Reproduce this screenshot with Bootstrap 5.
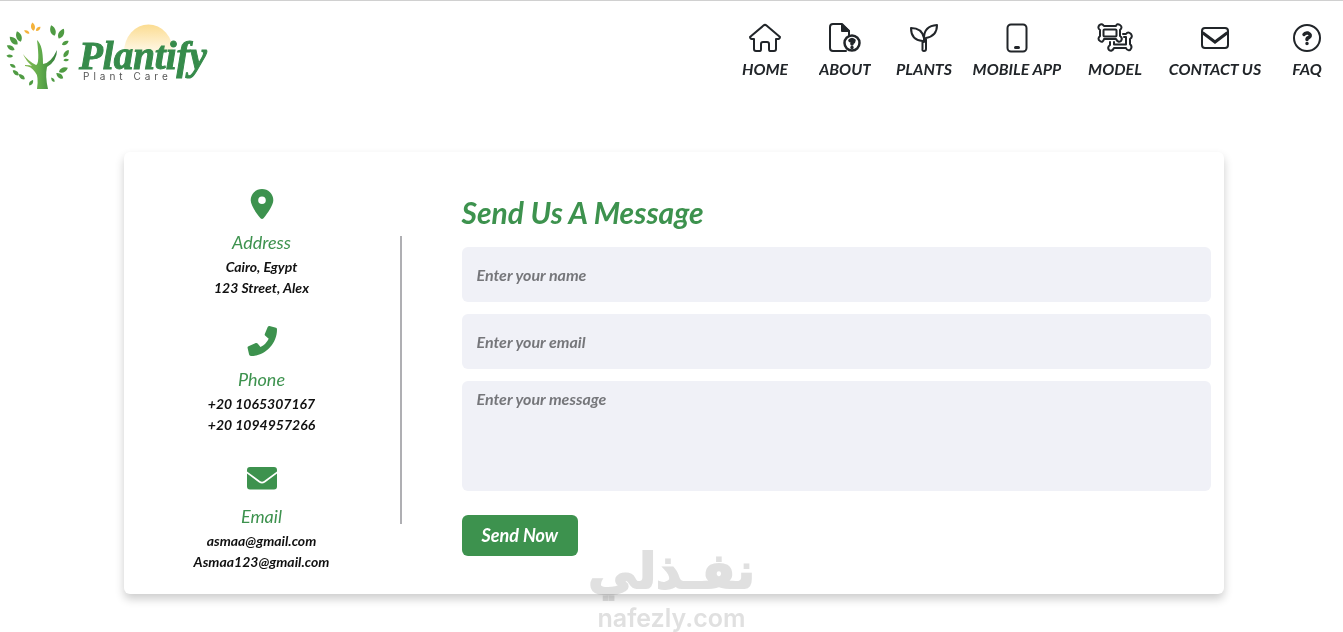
<!DOCTYPE html>
<html lang="en">
<head>
<meta charset="utf-8">
<meta name="viewport" content="width=device-width, initial-scale=1">
<title>Plantify - Contact Us</title>
<link href="https://cdn.jsdelivr.net/npm/bootstrap@5.3.0/dist/css/bootstrap.min.css" rel="stylesheet">
<style>
  :root { --leaf: #3d924e; }
  body { font-family: Lato, "Liberation Sans", sans-serif; font-style: italic; font-weight: 700; border-top: 1px solid #d0d0d0; color: #111; }
  .site-nav { padding: 21px 0 20px; }
  .brand-art { width: 212px; height: 80px; margin-top: -7px; }
  .menu { display: grid; grid-template-columns: 80px 80px 78px 108px 88px 112px 72px; }
  .menu a { color: #212529; font-size: 16px; line-height: 24px; white-space: nowrap; }
  .menu svg { width: 36px; height: 32px; fill: none; stroke: currentColor; stroke-width: 2; stroke-linejoin: round; stroke-linecap: round; }
  .menu span { overflow: hidden; margin-top: 3px; }
  main { padding-left: 4px; }
  .contact { width: 84%; max-width: 1100px; margin: 37px auto; border-radius: 6px; background: #fff; box-shadow: 0 5px 10px rgba(0,0,0,.2); padding: 36px 13px 22px 0; }
  .info { flex: 0 0 276px; gap: 27px; }
  .divider { width: 2px; height: 288px; background: #afafb3; }
  .info svg { width: 32px; height: 32px; fill: var(--leaf); margin-bottom: 9px; }
  .info h2 { font-size: 18px; line-height: 27px; font-weight: 400; color: var(--leaf); margin: 0; }
  .info p { font-size: 14px; line-height: 21px; margin: 0; }
  .message { padding: 6px 0 0 60px; }
  .message h1 { font-size: 30px; line-height: 36px; font-weight: 700; color: var(--leaf); margin: 0 0 17px; }
  .message .form-control { height: 55px; background: #f0f1f7; border: 0; border-radius: 6px; padding: 0 15px; font-size: 16px; font-style: italic; font-weight: 700; margin-bottom: 12px; }
  .message .form-control::placeholder { color: #75767a; opacity: 1; }
  .message textarea.form-control { height: 110px; padding-top: 6px; resize: none; margin-bottom: 24px; }
  .send { background: var(--leaf); color: #fff; font-size: 18px; line-height: 27px; font-style: italic; font-weight: 700; padding: 7px 20px; border-radius: 6px; }
  .stamp { position: absolute; left: 0; right: 0; top: 540px; color: #e0e0e0; mix-blend-mode: multiply; pointer-events: none; font-style: normal; text-align: center; }
  .stamp-ar { font: 700 49px/62px "DejaVu Sans", sans-serif; -webkit-text-stroke: 2px #e0e0e0; }
  .stamp-en { font: 600 25px/30px Inter, sans-serif; }
</style>
</head>
<body class="position-relative min-vh-100">
<header class="site-nav d-flex justify-content-between align-items-start">
  <a href="#" aria-label="Plantify home">
    <svg class="brand-art" viewBox="0 15 212 80">
      <defs>
        <linearGradient id="trunk"><stop offset="0" stop-color="#8bbb55"/><stop offset=".5" stop-color="#61ac4b"/><stop offset="1" stop-color="#347d3c"/></linearGradient>
        <linearGradient id="sun" x2="0" y2="1"><stop offset="0" stop-color="#fbdc91"/><stop offset="1" stop-color="#fff8e7"/></linearGradient>
        <path id="leaf" d="M0 5C-4 2-3-3 0-6 4-2 3 3 0 5Z"/>
      </defs>
      <path fill="url(#trunk)" d="M37 89Q39 76 35 72Q31 66 25 66V65Q30 65 32 66Q26 61 23 54Q28 61 36 65Q40 64 37 40Q43 45 43 64Q51 63 57 50Q57 61 47 67Q45 76 48 89Z"/>
      <g fill="#4f9b43">
        <use href="#leaf" transform="translate(19 37) rotate(-20)"/><use href="#leaf" transform="translate(14 41) rotate(-45)"/>
        <use href="#leaf" transform="translate(11 48) rotate(-60) scale(.8)"/><use href="#leaf" transform="translate(10 56) rotate(-85) scale(.6)"/>
        <use href="#leaf" transform="translate(13 66) rotate(-60) scale(.6)"/><use href="#leaf" transform="translate(16 73) rotate(-50) scale(.7)"/>
        <use href="#leaf" transform="translate(22 77) rotate(-50) scale(.7)"/><use href="#leaf" transform="translate(31 83) rotate(35) scale(.6)"/>
        <use href="#leaf" transform="translate(53 31) rotate(-18)"/><use href="#leaf" transform="translate(61 34) rotate(28)"/>
        <use href="#leaf" transform="translate(65 43) rotate(60) scale(.7)"/><use href="#leaf" transform="translate(66 54) rotate(35)  scale(.8)"/>
        <use href="#leaf" transform="translate(66 60) rotate(85) scale(.5)"/><use href="#leaf" transform="translate(63 70) rotate(65) scale(.9)"/>
        <use href="#leaf" transform="translate(60 76) rotate(-50) scale(.8)"/><use href="#leaf" transform="translate(53 80) rotate(-35) scale(.5)"/>
      </g>
      <g fill="#f4b23b"><use href="#leaf" transform="translate(27 32) rotate(-60) scale(.55)"/><use href="#leaf" transform="translate(33 27) rotate(-8) scale(.75)"/><use href="#leaf" transform="translate(38 29) rotate(50) scale(.55)"/></g>
      <path d="M124 52a24 27 0 0 1 49 0Z" fill="url(#sun)"/>
      <text x="79" y="69" font-family="Liberation Serif, serif" font-size="39" font-weight="700" font-style="italic" fill="#368b4b" stroke="#368b4b">Plantify</text>
      <text x="83" y="80" font-family="Inter, sans-serif" font-size="10" font-weight="400" font-style="normal" letter-spacing="4" fill="#555">Plant Care</text>
    </svg>
  </a>
  <nav class="menu">
    <a href="#" class="d-flex flex-column align-items-center text-decoration-none"><svg viewBox="0 0 36 32"><path d="M3 15 16.500 3.500Q18 2.200 19.500 3.500L33 15Q33 17.500 29 17V27Q29 29 27 29H23Q22 29 22 27V22Q22 20 20 20H16Q14 20 14 22V27Q14 29 13 29H9Q7 29 7 27V17Q3 17.500 3 15Z"/></svg><span>HOME</span></a>
    <a href="#" class="d-flex flex-column align-items-center text-decoration-none"><svg viewBox="0 0 36 32"><path d="M19 29H6Q3 29 3 26V5Q3 2 6 2H15L22 9V14M15 2V7Q15 9 17 9H22"/><path fill="currentColor" d="M15 3 22 9H15Z"/><circle cx="25" cy="21" r="7.500" stroke-width="2.500"/><path stroke-width="3.500" d="M23 18.500Q25 16.500 27 18.500Q27 20 25 21V22M25 25.500V25.500"/></svg><span>ABOUT</span></a>
    <a href="#" class="d-flex flex-column align-items-center text-decoration-none"><svg viewBox="0 0 36 32"><path d="M16.500 19Q5 18 5 6Q16 6 18 16Q18 4 31 3Q31 14 20 16V27Q20 29 18 29Q16 29 16.500 27ZM18 14V20"/></svg><span>PLANTS</span></a>
    <a href="#" class="d-flex flex-column align-items-center text-decoration-none"><svg viewBox="0 0 36 32"><rect x="8.500" y="2.500" width="19" height="27" rx="3.500"/><path stroke-width="3" d="M16.500 25.500H19.500"/></svg><span>MOBILE APP</span></a>
    <a href="#" class="d-flex flex-column align-items-center text-decoration-none"><svg viewBox="0 0 36 32"><g stroke-width="2"><path d="M7 4Q5 1 2.500 3Q0 6 3 8V14Q0 17 3 19Q6 21 7 17H19Q21 21 24 19Q26 16 23 14V8Q26 5 23 3Q20 1 19 4Z"/><rect x="6.500" y="7.500" width="13" height="7" rx="1"/></g><path stroke-width="2" d="M26 12H29Q31 9 34 12Q36 15 33 17V22Q36 25 33 28Q30 29 29 26H17Q15 30 12 28Q10 25 13 23V20M27 15H29V22.500H17V20"/></svg><span>MODEL</span></a>
    <a href="#" class="d-flex flex-column align-items-center text-decoration-none"><svg viewBox="0 0 36 32"><rect x="5" y="6" width="26" height="20" rx="3"/><path stroke-width="3" stroke-linejoin="miter" d="M6 11 18 20 30 11"/></svg><span>CONTACT US</span></a>
    <a href="#" class="d-flex flex-column align-items-center text-decoration-none"><svg viewBox="0 0 36 32"><circle cx="18" cy="16" r="13"/><path stroke-width="3.500" d="M15 12.500Q16 10.500 19 11Q23 13 20 15.500Q18 16 18 17.500M18 21.500V21.500"/></svg><span>FAQ</span></a>
  </nav>
</header>

<main>
  <section class="contact d-flex">
    <div class="info d-flex flex-column text-center">
      <div>
        <svg viewBox="0 0 32 32"><path fill-rule="evenodd" d="M16 1A11.300 11.300 0 0 0 4.700 12.300C4.700 17 10 25 14.500 30.300Q16 31.800 17.500 30.300C22 25 27.300 17 27.300 12.300A11.300 11.300 0 0 0 16 1ZM16 8.500A3.800 3.800 0 1 1 16 16.100 3.800 3.800 0 0 1 16 8.500Z"/></svg>
        <h2>Address</h2><p>Cairo, Egypt</p><p>123 Street, Alex</p>
      </div>
      <div>
        <svg viewBox="0 0 32 32"><path d="M30 2.700 23.500 1.100Q22.300 1 21.700 2L18.800 9Q18.400 10 19.300 10.800L22.700 13.700Q20 19.300 14.500 22L11.600 18.500Q10.800 17.600 9.800 18L2.500 21.200Q1.300 21.700 1.600 23L3.100 29.600Q3.400 31 4.900 31C19 31 31 19 31 4.500Q31 3 30 2.700Z"/></svg>
        <h2>Phone</h2><p>+20 1065307167</p><p>+20 1094957266</p>
      </div>
      <div>
        <svg viewBox="0 0 32 32"><path d="M4 5H28Q31 5 31 8V9.500L18 19Q16 20.500 14 19L1 9.500V8Q1 5 4 5ZM1 11.500 13 20.500Q16 22.700 19 20.500L31 11.500V24.500Q31 27.500 28 27.500H4Q1 27.500 1 24.500Z"/></svg>
        <h2>Email</h2><p>asmaa@gmail.com</p><p>Asmaa123@gmail.com</p>
      </div>
    </div>
    <div class="divider align-self-center flex-shrink-0"></div>
    <form class="message flex-grow-1">
      <h1>Send Us A Message</h1>
      <input type="text" class="form-control" placeholder="Enter your name" aria-label="Name">
      <input type="email" class="form-control" placeholder="Enter your email" aria-label="Email">
      <textarea class="form-control" placeholder="Enter your message" aria-label="Message"></textarea>
      <button type="button" class="send border-0">Send Now</button>
    </form>
  </section>
</main>
<div class="stamp"><div class="stamp-ar" lang="ar" dir="rtl">نفـذلي</div><div class="stamp-en">nafezly.com</div></div>
<script src="https://cdn.jsdelivr.net/npm/bootstrap@5.3.0/dist/js/bootstrap.bundle.min.js"></script>
</body>
</html>
